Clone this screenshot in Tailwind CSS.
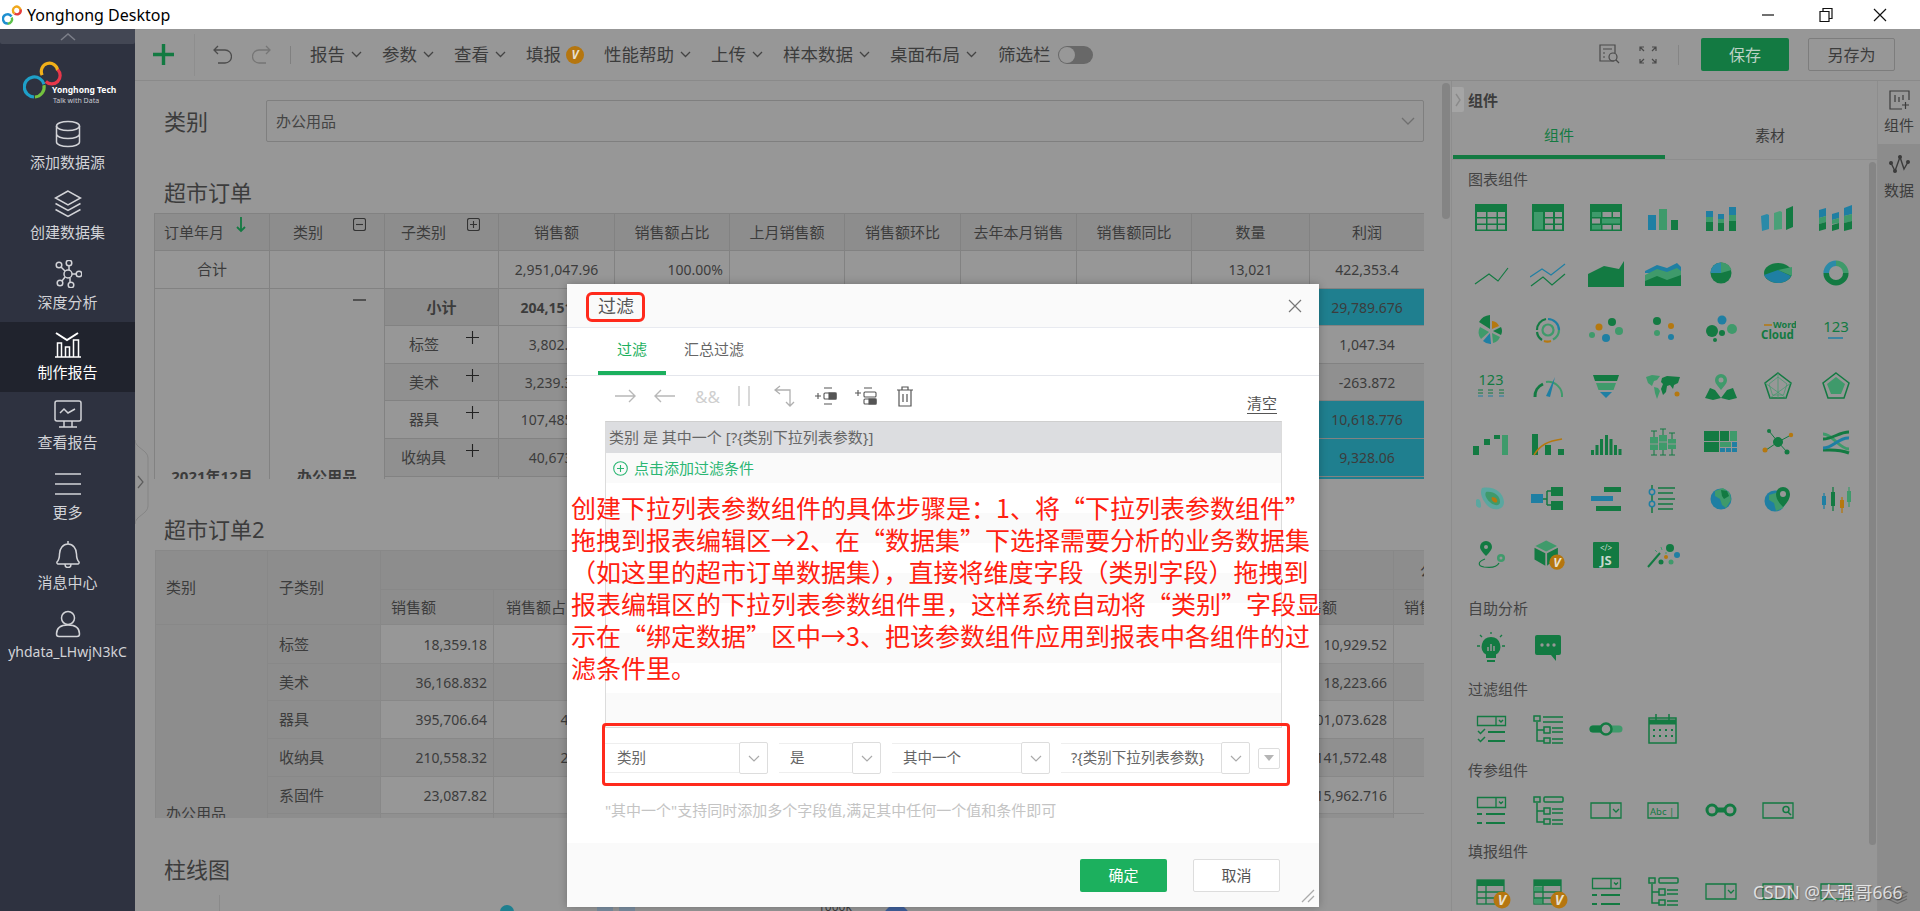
<!DOCTYPE html>
<html lang="zh-CN">
<head>
<meta charset="UTF-8">
<title>Yonghong Desktop</title>
<script src="https://cdn.jsdelivr.net/npm/@tailwindcss/browser@4"></script>
</head>
<body class="h-[911px] overflow-hidden bg-[#979797] font-['Noto_Sans','Noto_Sans_CJK_SC',sans-serif] text-[#3c3c3c]">

<!-- title bar -->
<div class="h-[29px] bg-white flex items-center text-black">
  <svg class="ml-[2px] w-[21px] h-[22px]" viewBox="0 0 21 22" fill="none" stroke-width="2.4">
    <path d="M6 19.5a4.6 4.6 0 1 1 3.5-7" stroke="#1e8fd0"/><path d="M9.8 13.5a4.6 4.6 0 0 1-4 6.2" stroke="#5cc04a"/>
    <path d="M12.5 9.5a3.8 3.8 0 1 1 6-3" stroke="#f0a81c"/><path d="M18.6 5.5a3.8 3.8 0 0 1-6 4" stroke="#e63c3c"/>
  </svg>
  <span class="ml-[4px] text-[16px]">Yonghong Desktop</span>
  <svg class="ml-auto mr-[24px] w-[134px] h-[16px]" viewBox="0 0 134 16" fill="none" stroke="#111" stroke-width="1.2">
    <path d="M0 8h12"/><path d="M58 4.5h9v10h-9zM61 4.500v-3h9v10h-3"/><path d="M112 2l12 12M124 2l-12 12"/>
  </svg>
</div>

<div class="flex h-[882px]">
  <!-- sidebar -->
  <aside class="w-[135px] shrink-0 bg-[#2e3240] flex flex-col items-center text-[15px] text-[#d2d3d7] relative z-10">
    <div class="w-full h-[15px] bg-[#434754] rounded-b-[2px] flex justify-center items-center">
      <svg class="w-[16px] h-[9px]" viewBox="0 0 16 9" fill="none" stroke="#7b7e88" stroke-width="1.6"><path d="M1 8l7-6 7 6"/></svg>
    </div>
    <div class="h-[68px] w-full relative">
      <svg class="absolute left-[23px] top-[17px] w-[42px] h-[41px]" viewBox="0 0 46 42" fill="none" stroke-width="3.5">
        <path d="M12 38a11 11 0 1 1 11-14" stroke="#1ea0c8"/><path d="M23 25a11 11 0 0 1-10 13" stroke="#74c23f"/>
        <path d="M21 14a9 9 0 1 1 17-5" stroke="#f1b019"/><path d="M38 8a9 9 0 0 1-13 13" stroke="#e8374a"/>
      </svg>
      <div class="absolute left-[52px] top-[40px] text-[8.500px] leading-[12px] font-bold text-white whitespace-nowrap">Yonghong Tech</div>
      <div class="absolute left-[53px] top-[52px] text-[7px] leading-[10px] text-[#c9cad0] whitespace-nowrap">Talk with Data</div>
    </div>

    <div class="w-full h-[70px] pt-[8px] flex flex-col items-center">
      <svg class="w-[28px] h-[28px]" viewBox="0 0 28 28" fill="none" stroke="#d2d3d7" stroke-width="1.5"><ellipse cx="14" cy="6" rx="11.500" ry="4.500"/><path d="M2.500 6v16c0 2.500 5 4.500 11.500 4.500s11.500-2 11.500-4.500V6M2.500 14c0 2.500 5 4.500 11.500 4.500s11.500-2 11.500-4.500"/></svg>
      <span class="mt-[4px] leading-[20px]">添加数据源</span>
    </div>
    <div class="w-full h-[70px] pt-[8px] flex flex-col items-center">
      <svg class="w-[28px] h-[28px]" viewBox="0 0 28 28" fill="none" stroke="#d2d3d7" stroke-width="1.5"><path d="M14 1L1.500 8 14 15l12.500-7zM1.500 13.500L14 20.500l12.500-7M1.500 19.500L14 26.500l12.500-7"/></svg>
      <span class="mt-[4px] leading-[20px]">创建数据集</span>
    </div>
    <div class="w-full h-[70px] pt-[8px] flex flex-col items-center">
      <svg class="w-[28px] h-[28px]" viewBox="0 0 28 28" fill="none" stroke="#d2d3d7" stroke-width="1.500"><circle cx="14" cy="14" r="4"/><circle cx="5" cy="5" r="2.800"/><circle cx="15" cy="3" r="2.800"/><circle cx="25" cy="14" r="2.800"/><circle cx="6" cy="23" r="2.800"/><circle cx="17" cy="25" r="2.800"/><path d="M7 7l4 4M15 6v4M18 14h4M8 21l3-4M16 22v-4"/></svg>
      <span class="mt-[4px] leading-[20px]">深度分析</span>
    </div>
    <div class="w-full h-[70px] pt-[8px] flex flex-col items-center bg-[#20232d] text-white">
      <svg class="w-[28px] h-[28px]" viewBox="0 0 28 28" fill="none" stroke="#fff" stroke-width="1.500"><path d="M2 3l11 7 11-7" stroke-width="2"/><path d="M1 27h26M3.500 27V13h4v14zM11.500 27V17h4v10zM19.500 27V10h5v17z"/></svg>
      <span class="mt-[4px] leading-[20px]">制作报告</span>
    </div>
    <div class="w-full h-[70px] pt-[8px] flex flex-col items-center">
      <svg class="w-[28px] h-[28px]" viewBox="0 0 28 28" fill="none" stroke="#d2d3d7" stroke-width="1.500"><rect x="1" y="1" width="26" height="20" rx="2"/><path d="M6 13l4-4 4 4 7-4M10 21v6M18 21v6M5 27h18"/></svg>
      <span class="mt-[4px] leading-[20px]">查看报告</span>
    </div>
    <div class="w-full h-[70px] pt-[8px] flex flex-col items-center">
      <svg class="w-[28px] h-[28px]" viewBox="0 0 28 28" fill="none" stroke="#d2d3d7" stroke-width="1.500"><path d="M1 4h26M1 14h26M1 24h26"/></svg>
      <span class="mt-[4px] leading-[20px]">更多</span>
    </div>
    <div class="w-full h-[70px] pt-[8px] flex flex-col items-center">
      <svg class="w-[28px] h-[28px]" viewBox="0 0 28 28" fill="none" stroke="#d2d3d7" stroke-width="1.500"><path d="M3 22c2-2 2.500-4 2.500-8 0-5.500 3.500-10 8.500-10s8.500 4.500 8.500 10c0 4 .5 6 2.500 8 .5 1-.5 2-1 2H4c-.5 0-1.500-1-1-2zM11 24.500a3 3 0 0 0 6 0M14 1v3"/></svg>
      <span class="mt-[4px] leading-[20px]">消息中心</span>
    </div>
    <div class="w-full h-[70px] pt-[8px] flex flex-col items-center">
      <svg class="w-[28px] h-[28px]" viewBox="0 0 28 28" fill="none" stroke="#d2d3d7" stroke-width="1.500"><circle cx="14" cy="8" r="6.500"/><path d="M2.500 24c0-6 4-9 11.500-9s11.500 3 11.500 9c0 1.500-1 2.500-2.500 2.500H5c-1.500 0-2.500-1-2.500-2.500z"/></svg>
      <span class="mt-[4px] leading-[20px] text-[14px] whitespace-nowrap">yhdata_LHwjN3kC</span>
    </div>
    <!-- collapse handle -->
    <svg class="absolute left-[135px] top-[411px] w-[14px] h-[84px]" viewBox="0 0 14 84" fill="#979797" stroke="#858585"><path d="M0 0c0 8 13 10 13 18v48c0 8-13 10-13 18z"/><path d="M3 36l5 6-5 6" fill="none" stroke="#5d5d5d" stroke-width="1.200"/></svg>
  </aside>

  <div class="flex-1 flex flex-col min-w-0">
    <!-- toolbar -->
    <div class="h-[52px] shrink-0 border-b border-[#8a8a8a] flex items-center text-[17.500px] pr-[25px]">
      <svg class="ml-[18px] w-[21px] h-[21px]" viewBox="0 0 21 21" fill="#137a42"><path d="M8.800 0h3.400v8.800H21v3.400h-8.800V21H8.800v-8.800H0V8.800h8.800z"/></svg>
      <div class="ml-[20px] w-px h-[42px] bg-[#8e8e8e]"></div>
      <svg class="ml-[18px] w-[19px] h-[19px]" viewBox="0 0 19 19" fill="none" stroke="#4c4c4c" stroke-width="1.300"><path d="M5 1L1 5l4 4M1 5h11a6 6 0 0 1 0 13H5"/></svg>
      <svg class="ml-[20px] w-[19px] h-[19px]" viewBox="0 0 19 19" fill="none" stroke="#767676" stroke-width="1.300"><path d="M14 1l4 4-4 4M18 5H7a6 6 0 0 0 0 13h7"/></svg>
      <div class="ml-[19px] w-px h-[18px] bg-[#808080]"></div>
      <div class="ml-[19px] flex items-center gap-[20px] whitespace-nowrap">
        <div class="flex items-center gap-[6px]"><span>报告</span><svg class="w-[11px] h-[7px]" viewBox="0 0 11 7" fill="none" stroke="#444" stroke-width="1.300"><path d="M1 1l4.500 4.500L10 1"/></svg></div>
        <div class="flex items-center gap-[6px]"><span>参数</span><svg class="w-[11px] h-[7px]" viewBox="0 0 11 7" fill="none" stroke="#444" stroke-width="1.300"><path d="M1 1l4.500 4.500L10 1"/></svg></div>
        <div class="flex items-center gap-[6px]"><span>查看</span><svg class="w-[11px] h-[7px]" viewBox="0 0 11 7" fill="none" stroke="#444" stroke-width="1.300"><path d="M1 1l4.500 4.500L10 1"/></svg></div>
        <div class="flex items-center gap-[5px]"><span>填报</span><span class="w-[18px] h-[18px] rounded-full bg-[#b5760f] text-[#e8e0d0] text-[12px] leading-[18px] text-center font-bold italic">V</span></div>
        <div class="flex items-center gap-[6px]"><span>性能帮助</span><svg class="w-[11px] h-[7px]" viewBox="0 0 11 7" fill="none" stroke="#444" stroke-width="1.300"><path d="M1 1l4.500 4.500L10 1"/></svg></div>
        <div class="flex items-center gap-[6px]"><span>上传</span><svg class="w-[11px] h-[7px]" viewBox="0 0 11 7" fill="none" stroke="#444" stroke-width="1.300"><path d="M1 1l4.500 4.500L10 1"/></svg></div>
        <div class="flex items-center gap-[6px]"><span>样本数据</span><svg class="w-[11px] h-[7px]" viewBox="0 0 11 7" fill="none" stroke="#444" stroke-width="1.300"><path d="M1 1l4.500 4.500L10 1"/></svg></div>
        <div class="flex items-center gap-[6px]"><span>桌面布局</span><svg class="w-[11px] h-[7px]" viewBox="0 0 11 7" fill="none" stroke="#444" stroke-width="1.300"><path d="M1 1l4.500 4.500L10 1"/></svg></div>
        <div class="flex items-center gap-[7px] ml-[1px]"><span>筛选栏</span>
          <div class="w-[35px] h-[18px] rounded-full bg-[#686868] p-[1px]"><div class="w-[16px] h-[16px] rounded-full bg-[#989898]"></div></div>
        </div>
      </div>
      <svg class="ml-auto w-[21px] h-[21px]" viewBox="0 0 21 21" fill="none" stroke="#4a4a4a" stroke-width="1.200"><path d="M15 17H1V1h15v8M4 5h9M4 9h2M4 13h2"/><circle cx="14" cy="13" r="4"/><path d="M17 16l3 3"/></svg>
      <svg class="ml-[19px] w-[18px] h-[18px]" viewBox="0 0 18 18" fill="none" stroke="#4a4a4a" stroke-width="1.200"><path d="M1 5V1h4M1 1l4 4M13 1h4v4M17 1l-4 4M1 13v4h4M1 17l4-4M17 13v4h-4M17 17l-4-4"/></svg>
      <div class="ml-[21px] w-px h-[20px] bg-[#858585]"></div>
      <div class="ml-[22px] w-[88px] h-[33px] rounded-[2px] bg-[#137a42] text-[#bcd2c5] text-[16px] flex items-center justify-center">保存</div>
      <div class="ml-[19px] w-[87px] h-[33px] rounded-[2px] border border-[#7d7d7d] text-[16px] flex items-center justify-center">另存为</div>
    </div>

    <div class="flex-1 flex min-h-0">
      <!-- report canvas -->
      <main class="w-[1316px] shrink-0 relative overflow-hidden pl-[19px]">
        <div class="mt-[19px] flex items-center h-[42px] pl-[10px] w-[1270px]">
          <span class="w-[102px] text-[22px]">类别</span>
          <div class="flex-1 h-[42px] border border-[#7f7f7f] rounded-[2px] flex items-center pl-[9px] pr-[8px] text-[15px] text-[#444]">办公用品
            <svg class="ml-auto w-[14px] h-[8px]" viewBox="0 0 14 8" fill="none" stroke="#6f6f6f" stroke-width="1.300"><path d="M1 1l6 6 6-6"/></svg>
          </div>
        </div>
        <div class="pt-[35px] pb-[6px] pl-[10px] text-[22px] leading-[30px]">超市订单</div>

        <div class="h-[266px] w-[1270px] overflow-hidden">
          <table class="table-fixed border-collapse w-[1270px] text-center text-[14px] [&_td]:border [&_td]:border-[#828282]">
            <colgroup><col class="w-[115px]"><col class="w-[115px]"><col class="w-[114px]"><col class="w-[116px]"><col class="w-[115px]"><col class="w-[115px]"><col class="w-[116px]"><col class="w-[116px]"><col class="w-[115px]"><col class="w-[118px]"><col class="w-[115px]"></colgroup>
            <tr class="h-[37px] bg-[#8d8d8d] text-[15px]">
              <td class="relative text-left pl-[9px]">订单年月<svg class="absolute right-[23px] top-[3px] w-[10px] h-[16px]" viewBox="0 0 10 16" fill="none" stroke="#137a42" stroke-width="1.800"><path d="M5 0v14M1 10l4 4 4-4"/></svg></td>
              <td class="relative text-left pl-[23px]">类别<svg class="absolute right-[18px] top-[4px] w-[13px] h-[13px]" viewBox="0 0 13 13" fill="none" stroke="#333" stroke-width="1.100"><rect x=".5" y=".5" width="12" height="12" rx="2"/><path d="M3 6.500h7"/></svg></td>
              <td class="relative text-left pl-[16px]">子类别<svg class="absolute right-[18px] top-[4px] w-[13px] h-[13px]" viewBox="0 0 13 13" fill="none" stroke="#333" stroke-width="1.100"><rect x=".5" y=".5" width="12" height="12" rx="2"/><path d="M3 6.500h7M6.500 3v7"/></svg></td>
              <td>销售额</td><td>销售额占比</td><td>上月销售额</td><td>销售额环比</td><td>去年本月销售</td><td>销售额同比</td><td>数量</td><td>利润</td>
            </tr>
            <tr class="h-[38px]"><td class="text-[15px]">合计</td><td></td><td></td><td>2,951,047.96</td><td class="text-right pr-[6px]">100.00%</td><td></td><td></td><td></td><td></td><td>13,021</td><td>422,353.4</td></tr>
            <tr class="h-[37px]">
              <td rowspan="6" class="font-bold text-[15px]">2021年12月</td>
              <td rowspan="6" class="font-bold text-[15px] relative">办公用品<svg class="absolute right-[18px] top-[10px] w-[13px] h-[2px]" viewBox="0 0 13 2"><path d="M0 1h13" stroke="#222" stroke-width="1.200"/></svg></td>
              <td class="font-bold bg-[#8d8d8d] text-[15px]">小计</td><td class="font-bold">204,151.76</td><td></td><td></td><td></td><td></td><td></td><td></td><td class="bg-[#1f7f8f]">29,789.676</td>
            </tr>
            <tr class="h-[38px]"><td class="relative text-[15px] text-left pl-[24px]">标签<svg class="absolute right-[19px] top-[5px] w-[13px] h-[13px]" viewBox="0 0 13 13" stroke="#222" stroke-width="1.100"><path d="M0 6.500h13M6.500 0v13"/></svg></td><td>3,802.47</td><td></td><td></td><td></td><td></td><td></td><td></td><td>1,047.34</td></tr>
            <tr class="h-[37px] bg-[#909090]"><td class="relative text-[15px] text-left pl-[24px]">美术<svg class="absolute right-[19px] top-[5px] w-[13px] h-[13px]" viewBox="0 0 13 13" stroke="#222" stroke-width="1.100"><path d="M0 6.500h13M6.500 0v13"/></svg></td><td>3,239.376</td><td></td><td></td><td></td><td></td><td></td><td></td><td>-263.872</td></tr>
            <tr class="h-[38px]"><td class="relative text-[15px] text-left pl-[24px]">器具<svg class="absolute right-[19px] top-[5px] w-[13px] h-[13px]" viewBox="0 0 13 13" stroke="#222" stroke-width="1.100"><path d="M0 6.500h13M6.500 0v13"/></svg></td><td>107,485.28</td><td></td><td></td><td></td><td></td><td></td><td></td><td class="bg-[#1f7f8f]">10,618.776</td></tr>
            <tr class="h-[38px] bg-[#909090]"><td class="relative text-[15px] text-left pl-[16px]">收纳具<svg class="absolute right-[19px] top-[5px] w-[13px] h-[13px]" viewBox="0 0 13 13" stroke="#222" stroke-width="1.100"><path d="M0 6.500h13M6.500 0v13"/></svg></td><td>40,673.8</td><td></td><td></td><td></td><td></td><td></td><td></td><td class="bg-[#1f7f8f]">9,328.06</td></tr>
            <tr class="h-[188px]"><td></td><td></td><td></td><td></td><td></td><td></td><td></td><td></td><td class="bg-[#1f7f8f]"></td></tr>
          </table>
        </div>

        <div class="pt-[35px] pb-[6px] pl-[10px] text-[22px] leading-[30px]">超市订单2</div>

        <div class="ml-px h-[268px] w-[1269px] overflow-hidden">
          <table class="table-fixed border-collapse w-[1350px] text-[14px] [&_td]:border [&_td]:border-[#888888]">
            <colgroup><col class="w-[112px]"><col class="w-[113px]"><col class="w-[113px]"><col class="w-[113px]"><col class="w-[113px]"><col class="w-[113px]"><col class="w-[113px]"><col class="w-[112px]"><col class="w-[112px]"><col class="w-[112px]"><col class="w-[112px]"><col class="w-[112px]"></colgroup>
            <tr class="h-[39px] bg-[#8d8d8d] text-[15px]">
              <td rowspan="2" class="pl-[10px]">类别</td><td rowspan="2" class="pl-[11px]">子类别</td><td colspan="9"></td><td class="pl-[26px] whitespace-nowrap">公司</td>
            </tr>
            <tr class="h-[35px] bg-[#8d8d8d] text-[15px] whitespace-nowrap">
              <td class="pl-[10px]">销售额</td><td class="pl-[12px]">销售额占比</td><td></td><td></td><td></td><td></td><td></td><td></td><td class="pl-[10px]">销售额</td><td class="pl-[10px]">销售额占比</td>
            </tr>
            <tr class="h-[39px] text-right">
              <td rowspan="6" class="bg-[#8d8d8d] pl-[10px] text-left text-[15px]">办公用品</td><td class="bg-[#8d8d8d] pl-[11px] text-left text-[15px]">标签</td><td class="pr-[6px]">18,359.18</td><td></td><td></td><td></td><td></td><td></td><td></td><td></td><td class="pr-[6px]">10,929.52</td><td></td>
            </tr>
            <tr class="h-[37px] text-right bg-[#909090]"><td class="bg-[#8d8d8d] pl-[11px] text-left text-[15px]">美术</td><td class="pr-[6px]">36,168.832</td><td></td><td></td><td></td><td></td><td></td><td></td><td></td><td class="pr-[6px]">18,223.66</td><td></td></tr>
            <tr class="h-[38px] text-right"><td class="bg-[#8d8d8d] pl-[11px] text-left text-[15px]">器具</td><td class="pr-[6px]">395,706.64</td><td class="pr-[6px]">4.65%</td><td></td><td></td><td></td><td></td><td></td><td></td><td class="pr-[6px]">101,073.628</td><td></td></tr>
            <tr class="h-[38px] text-right bg-[#909090]"><td class="bg-[#8d8d8d] pl-[11px] text-left text-[15px]">收纳具</td><td class="pr-[6px]">210,558.32</td><td class="pr-[6px]">2.47%</td><td></td><td></td><td></td><td></td><td></td><td></td><td class="pr-[6px]">141,572.48</td><td></td></tr>
            <tr class="h-[37px] text-right"><td class="bg-[#8d8d8d] pl-[11px] text-left text-[15px]">系固件</td><td class="pr-[6px]">23,087.82</td><td></td><td></td><td></td><td></td><td></td><td></td><td></td><td class="pr-[6px]">15,962.716</td><td></td></tr>
            <tr class="h-[189px] text-right bg-[#909090]"><td class="bg-[#8d8d8d]"></td><td></td><td></td><td></td><td></td><td></td><td></td><td></td><td></td><td></td></tr>
          </table>
        </div>

        <div class="pt-[36px] pl-[10px] text-[22px] leading-[30px]">柱线图</div>
        <!-- top of the chart, only a strip of it shows below the dialog -->
        <div class="absolute left-[84px] top-[814px] w-px h-[20px] bg-[#8a8a8a]"></div>
        <div class="absolute left-[365px] top-[824px] w-[14px] h-[14px] rounded-full bg-[#1f7f8f]"></div>
        <div class="absolute left-[462px] top-[824px] w-[16px] h-[10px] bg-[#7a8da0]"></div>
        <div class="absolute left-[484px] top-[824px] w-[16px] h-[10px] bg-[#7a8da0]"></div>
        <div class="absolute left-[683px] top-[818px] text-[12px] leading-[16px]">1000k</div>
        <div class="absolute left-[748px] top-[824px] w-[27px] h-[27px] rounded-full bg-[#3f5f99]"></div>

        <div class="absolute left-[1307px] top-[2px] w-[8px] h-[136px] rounded-full bg-[#848484]"></div>
      </main>

      <!-- component panel -->
      <section class="w-[426px] shrink-0 relative border-l border-[#8d8d8d]">
        <div class="absolute left-0 top-[6px] w-[12px] h-[25px] bg-[#a5a5a5] flex items-center justify-center rounded-r-[2px]">
          <svg class="w-[6px] h-[14px]" viewBox="0 0 6 14" fill="none" stroke="#8a8a8a" stroke-width="1.400"><path d="M1 1l4 6-4 6"/></svg>
        </div>
        <div class="h-[38px] pl-[16px] flex items-center text-[15px] font-bold">组件</div>
        <div class="h-[41px] flex text-[15px] border-b border-[#8d8d8d] pl-[1px]">
          <div class="w-[212px] text-center text-[#137a42] pt-[5px] border-b-[4px] border-[#137a42]">组件</div>
          <div class="flex-1 text-center pt-[5px] pr-[2px]">素材</div>
        </div>

        <div class="pl-[10px] h-[750px] overflow-hidden">
          <div class="pl-[6px] text-[15px] leading-[20px] mt-[9px] text-[#444]">图表组件</div>
          <div class="grid grid-cols-[repeat(7,57.5px)] auto-rows-[56.3px] [&>svg]:w-[36px] [&>svg]:h-[32px] [&>svg]:place-self-center">
            <!-- row 1 -->
            <svg viewBox="0 0 36 32"><rect x="2" y="3" width="32" height="27" fill="#137a42"/><path fill="#979797" d="M4 11h9v5H4zM14.500 11h9v5h-9zM25 11h7v5h-7zM4 17.500h9v5H4zM14.500 17.500h9v5h-9zM25 17.500h7v5h-7zM4 24h9v4.500H4zM14.500 24h9v4.500h-9zM25 24h7v4.500h-7z"/></svg>
            <svg viewBox="0 0 36 32"><rect x="2" y="3" width="32" height="27" fill="#137a42"/><path fill="#3f9a6b" d="M4 11h9v17.500H4z"/><path fill="#979797" d="M15 11h8v5h-8zM25 11h7v5h-7zM15 17.500h8v5h-8zM25 17.500h7v5h-7zM15 24h8v4.500h-8zM25 24h7v4.500h-7z"/></svg>
            <svg viewBox="0 0 36 32"><rect x="2" y="3" width="32" height="27" fill="#137a42"/><path fill="#3f9a6b" d="M4 11h9v5H4zM14 17.500h18v5H14zM4 24h9v4.500H4z"/><path fill="#979797" d="M14.500 11h9v5h-9zM25 11h7v5h-7zM4 17.500h8v5H4zM14.500 24h9v4.500h-9zM25 24h7v4.500h-7z"/></svg>
            <svg viewBox="0 0 36 32"><path fill="#1f7fa3" d="M3 14h8v15H3z"/><path fill="#3f9a6b" d="M14 8h8v21h-8z"/><path fill="#137a42" d="M26 19h7v10h-7z"/></svg>
            <svg viewBox="0 0 36 32"><path fill="#1f7fa3" d="M3 10h7v6H3zM15 13h6v5h-6zM26 6h7v8h-7z"/><path fill="#3f9a6b" d="M3 16h7v5H3zM15 18h6v4h-6zM26 14h7v6h-7z"/><path fill="#137a42" d="M3 21h7v9H3zM15 22h6v8h-6zM26 20h7v10h-7z"/></svg>
            <svg viewBox="0 0 36 32"><path fill="#2b8aa8" d="M1 15l6-2 2 1v14l-7 2z"/><path fill="#4aa078" d="M14 12l6-2 2 1v17l-8 1z"/><path fill="#137a42" d="M26 8l7-3v21l-7 3z"/></svg>
            <svg viewBox="0 0 36 32"><path fill="#1f7fa3" d="M1 9l7-2v8l-7 2zM14 13l7-2v6l-7 2zM26 7l8-3v9l-8 2z"/><path fill="#3f9a6b" d="M1 17l7-2v6l-7 2zM14 19l7-2v5l-7 1zM26 15l8-2v7l-8 2z"/><path fill="#137a42" d="M1 23l7-2v7l-7 2zM14 24l7-2v6l-7 2zM26 22l8-2v8l-8 2z"/></svg>
            <!-- row 2 -->
            <svg viewBox="0 0 36 32" fill="none" stroke="#137a42" stroke-width="1.200"><path d="M2 27l14-10 9 7 10-13"/></svg>
            <svg viewBox="0 0 36 32" fill="none" stroke-width="1.200"><path stroke="#1f7fa3" d="M0 20l12-8 9 6 14-11"/><path stroke="#137a42" d="M1 29l12-9 9 8 13-11"/></svg>
            <svg viewBox="0 0 36 32"><path fill="#137a42" d="M0 17l16-8 15 3 5-8v26H0z"/></svg>
            <svg viewBox="0 0 36 32"><path fill="#1f7fa3" d="M0 14l12-6 10 3 10-5 4 4v6H0z"/><path fill="#3f9a6b" d="M0 18l12-6 10 3 10-4 4 3v10H0z"/><path fill="#137a42" d="M0 24l12-5 10 4 14-5v11H0z"/></svg>
            <svg viewBox="0 0 36 32"><circle cx="18" cy="16" r="10.500" fill="#137a42"/><path fill="#2b8aa8" d="M18 16H7.500A10.500 10.500 0 0 1 18 5.500z"/><path fill="#3f9a6b" d="M18 16V5.500A10.500 10.500 0 0 1 28.500 13z"/></svg>
            <svg viewBox="0 0 36 32"><ellipse cx="18" cy="16" rx="14" ry="10" fill="#137a42"/><path fill="#1f7fa3" d="M4 18l14-5 13 6c-3 5-8 7-13 7-7 0-12-4-14-8z"/><path fill="#3f9a6b" d="M18 13l14-3v9z"/></svg>
            <svg viewBox="0 0 36 32" fill="none" stroke-width="5.500"><path stroke="#137a42" d="M8.200 16a9.800 9.800 0 0 0 19.600 0"/><path stroke="#2b8aa8" d="M8.200 16A9.800 9.800 0 0 1 18 6.200"/><path stroke="#3f9a6b" d="M18 6.200A9.800 9.800 0 0 1 27.800 16"/></svg>
            <!-- row 3 -->
            <svg viewBox="0 0 36 32"><path fill="#137a42" d="M17 15V1A14 14 0 0 0 6 8z"/><path fill="#b5780f" d="M19 15V7a8 8 0 0 1 7 5z"/><path fill="#137a42" d="M20 17l8-4a9 9 0 0 1 0 8z"/><path fill="#3f9a6b" d="M19 19l8 4a10 10 0 0 1-7 6z"/><path fill="#1f7fa3" d="M17 19l1 11a11 11 0 0 1-8-3z"/><path fill="#3f9a6b" d="M16 18l-8 7a11 11 0 0 1-1-12z"/></svg>
            <svg viewBox="0 0 36 32" fill="none" stroke-width="2.200"><path stroke="#1f7fa3" d="M18 5a11 11 0 0 1 11 11"/><path stroke="#137a42" d="M7 16a11 11 0 0 1 9-11"/><path stroke="#3f9a6b" d="M29 16a11 11 0 0 1-6 9.500"/><path stroke="#b5780f" d="M21 27a11 11 0 0 1-7 0"/><path stroke="#137a42" d="M12 26a11 11 0 0 1-5-8"/><circle cx="18" cy="16" r="5.500" stroke="#3f9a6b"/></svg>
            <svg viewBox="0 0 36 32"><circle cx="24" cy="8" r="4" fill="#137a42"/><circle cx="11" cy="13" r="3.500" fill="#b5780f"/><circle cx="31" cy="17" r="4" fill="#3f9a6b"/><circle cx="4" cy="21" r="3" fill="#3f9a6b"/><circle cx="18" cy="24" r="4" fill="#1f7fa3"/></svg>
            <svg viewBox="0 0 36 32"><circle cx="12" cy="7" r="4" fill="#137a42"/><circle cx="26" cy="12" r="3" fill="#b5780f"/><circle cx="12" cy="19" r="3" fill="#3f9a6b"/><circle cx="26" cy="23" r="3" fill="#1f7fa3"/></svg>
            <svg viewBox="0 0 36 32"><circle cx="9" cy="17" r="6" fill="#137a42"/><circle cx="19" cy="6" r="4.500" fill="#1f7fa3"/><circle cx="29" cy="15" r="5" fill="#3f9a6b"/><circle cx="19" cy="19" r="3" fill="#137a42"/><circle cx="12" cy="26" r="2" fill="#137a42"/></svg>
            <svg viewBox="0 0 36 32"><text x="13" y="14" font-size="9" font-weight="700" fill="#137a42">Word</text><path d="M4 11h8" stroke="#b5780f" stroke-width="1.500"/><text x="1" y="25" font-size="11.500" font-weight="700" fill="#137a42">Cloud</text></svg>
            <svg viewBox="0 0 36 32"><text x="18" y="18" font-size="15" text-anchor="middle" fill="#137a42">123</text><path d="M10 24h15" stroke="#1f7fa3" stroke-width="1.500"/></svg>
            <!-- row 4 -->
            <svg viewBox="0 0 36 32"><text x="18" y="15" font-size="14.500" text-anchor="middle" fill="#137a42">123</text><path d="M5 20h5M15 20h5M26 20h5M5 23h5M15 23h5M26 23h5" stroke="#137a42" stroke-width="1"/><path d="M5 26h5M15 26h5M26 26h5" stroke="#1f7fa3" stroke-width="1"/></svg>
            <svg viewBox="0 0 36 32" fill="none"><path d="M5 27a13.500 13.500 0 0 1 8-13" stroke="#137a42" stroke-width="3"/><path d="M16 12a14 14 0 0 1 16 15" stroke="#3f9a6b" stroke-width="2"/><path d="M25 7l-9 19 4 1z" fill="#1f7fa3"/></svg>
            <svg viewBox="0 0 36 32"><path fill="#137a42" d="M5 5h26l-2 6H7z"/><path fill="#3f9a6b" d="M8 13h20l-2.500 7h-15z"/><path fill="#1f7fa3" d="M12 22h12l-6 6z"/></svg>
            <svg viewBox="0 0 36 32"><path fill="#3f9a6b" d="M1 7l6-2 8 1-3 4-3 1-2 5-4-3z"/><path fill="#3f9a6b" d="M9 17l4 1 2 3-3 8-2-6z"/><path fill="#137a42" d="M17 8l5-2 13 1-2 6-4 2-1 4-3-4-3 1-1 6-3 3-2-6 2-5-2-2z"/><circle cx="32" cy="24" r="2.500" fill="#b5780f"/></svg>
            <svg viewBox="0 0 36 32"><path fill="#137a42" d="M2 28l5-10 5 2 6 8 6-8 6-2 4 10-8 2-8-2-8 2z"/><path fill="#3f9a6b" d="M18 20c-4-5-6-7-6-10a6 6 0 0 1 12 0c0 3-2 5-6 10z"/><circle cx="18" cy="10" r="2.500" fill="#979797"/></svg>
            <svg viewBox="0 0 36 32" fill="none" stroke="#137a42"><path d="M18 3l13 10-5 15H10L5 13z" stroke-width="1.500"/><path d="M18 7l9 7-3.500 11h-11L9 14zM18 3v25M5 13l21 15M31 13L10 28" stroke="#3f9a6b" stroke-width=".7"/></svg>
            <svg viewBox="0 0 36 32" fill="none"><path d="M18 3l13 10-5 15H10L5 13z" stroke="#137a42" stroke-width="1.500"/><path d="M18 7l9 7-4 10H13L9 14z" fill="#3f9a6b"/></svg>
            <!-- row 5 -->
            <svg viewBox="0 0 36 32"><path fill="#137a42" d="M0 20h6v9H0zM11 13h6v6h-6zM21 9h6v4h-6z"/><path fill="#3f9a6b" d="M29 9h6v20h-6z"/></svg>
            <svg viewBox="0 0 36 32"><path fill="#137a42" d="M2 8h6v21H2zM15 19h6v10h-6zM28 23h6v6h-6z"/><path d="M4 29c6-10 14-14 28-16" fill="none" stroke="#b5780f" stroke-width="1.500"/></svg>
            <svg viewBox="0 0 36 32"><path fill="#137a42" d="M3 24h3v5H3zM7.500 19h3v10h-3zM12 13h3v16h-3zM17 9h3v20h-3zM21.500 13h3v16h-3zM26 19h3v10h-3zM30.500 23h3v6h-3z"/></svg>
            <svg viewBox="0 0 36 32" stroke="#137a42" fill="#3f9a6b"><path d="M9 5v24M18 3v26M27 7v22M6 5h6M15 3h6M24 7h6M6 29h6M15 29h6M24 29h6"/><path stroke="none" d="M5 11h8v13H5zM14 9h8v15h-8zM23 13h8v10h-8z"/><path d="M5 18h8M14 16h8M23 18h8" stroke="#979797"/></svg>
            <svg viewBox="0 0 36 32"><path fill="#137a42" d="M1 5h15v10H1zM1 16h15v10H1zM17 5h9v10h-9z"/><path fill="#3f9a6b" d="M27 5h7v10h-7zM17 16h11v5H17z"/><path fill="#1f7fa3" d="M29 16h5v5h-5zM17 22h5v4h-5zM23 22h5v4h-5zM29 22h5v4h-5z"/></svg>
            <svg viewBox="0 0 36 32" stroke="#137a42"><path d="M18 16L9 5M18 16l13-7M18 16l-12 8M18 16l9 10"/><circle cx="18" cy="16" r="4.500" fill="#137a42"/><circle cx="9" cy="5" r="2" fill="#137a42" stroke="none"/><circle cx="31" cy="9" r="2.200" fill="#b5780f" stroke="none"/><circle cx="5" cy="24" r="2.500" fill="#b5780f" stroke="none"/><circle cx="27" cy="26" r="2.500" fill="#137a42" stroke="none"/></svg>
            <svg viewBox="0 0 36 32" fill="none" stroke-width="3"><path stroke="#3f9a6b" d="M5 8c10 0 16 15 26 15"/><path stroke="#137a42" d="M5 13c10 0 16-7 26-7M5 24c10 0 16-1 26 3"/><path stroke="#1f7fa3" d="M5 22c10 0 16-11 26-10"/></svg>
            <!-- row 6 -->
            <svg viewBox="0 0 36 32"><path fill="#5aa7a0" d="M9 5c12-2 21 4 22 14 0 8-9 9-15 5C10 19 6 10 9 5z"/><path fill="#3f9a6b" d="M13 9c8-1 14 4 14 10 0 4-5 4-9 1-4-3-7-8-5-11z"/><path fill="#b5780f" d="M19 14c4 0 6 3 5 5-2 2-7-2-5-5z"/><path fill="#5aa7a0" d="M3 17c3-3 5 1 5 6 0 3-4 2-5-1z"/></svg>
            <svg viewBox="0 0 36 32"><path fill="#1f7fa3" d="M1 11h12v9H1z"/><path fill="#137a42" d="M21 4h12v9H21zM21 18h12v9H21z"/><path d="M13 16h4M17 8h4M17 22h4M17 8v14" fill="none" stroke="#137a42" stroke-width="1.500"/></svg>
            <svg viewBox="0 0 36 32"><path fill="#137a42" d="M16 4h17v5H16z"/><path fill="#1f7fa3" d="M3 13h22v5H3z"/><path fill="#137a42" d="M8 23h25v5H8z"/></svg>
            <svg viewBox="0 0 36 32" fill="none"><path d="M7 2v28" stroke="#137a42" stroke-width="1.500"/><circle cx="7" cy="9" r="2.700" stroke="#1f7fa3" stroke-width="1.500" fill="#979797"/><circle cx="7" cy="21" r="2.700" stroke="#1f7fa3" stroke-width="1.500" fill="#979797"/><path d="M13 5h17M13 10h15M13 16h17M13 21h15M13 26h15" stroke="#137a42" stroke-width="1.500"/></svg>
            <svg viewBox="0 0 36 32"><circle cx="18" cy="16" r="10.500" fill="#1f7fa3"/><path fill="#3f9a6b" d="M12 8l8-3 7 5 1 7-5 8-4-3-2-6-5-3z"/><path fill="#137a42" d="M18 7l6 1 2 5-5 3-2-3z"/></svg>
            <svg viewBox="0 0 36 32"><circle cx="15" cy="18" r="10.500" fill="#1f7fa3"/><path fill="#3f9a6b" d="M9 12l10-3 6 8-2 8-7 3-2-8-5-3z"/><path fill="#137a42" d="M23 24c-5-5-7-9-7-13a7 7 0 0 1 14 0c0 4-2 8-7 13z"/><circle cx="23" cy="11" r="3" fill="#979797"/></svg>
            <svg viewBox="0 0 36 32" stroke-width="1.300"><path stroke="#1f7fa3" d="M6 10v16"/><path fill="#1f7fa3" d="M4 13h4v9H4z"/><path stroke="#137a42" d="M15 4v24"/><path fill="#137a42" d="M13 9h4v14h-4z"/><path stroke="#b5780f" d="M24 14v16"/><path fill="#b5780f" d="M22 17h4v8h-4z"/><path stroke="#3f9a6b" d="M31 4v20"/><path fill="#3f9a6b" d="M29 8h4v11h-4z"/></svg>
            <!-- row 7 -->
            <svg viewBox="0 0 36 32" fill="none"><path d="M13 17c-4-4-6-7-6-9a6 6 0 0 1 12 0c0 2-2 5-6 9z" fill="#137a42"/><circle cx="13" cy="8" r="2" fill="#979797"/><circle cx="28" cy="19" r="4" fill="#3f9a6b"/><circle cx="28" cy="19" r="1.500" fill="#979797"/><path d="M12 20c-8 3-7 7-1 8 7 1 13 0 15-4" stroke="#137a42" stroke-width="1.200"/></svg>
            <svg viewBox="0 0 40 32" class="overflow-visible"><path fill="#3f9a6b" d="M18 0l12 6-12 6L6 6z"/><path fill="#137a42" d="M5 8l12 6v14L5 21zM19 14l12-6v10l-12 10z"/><circle cx="30" cy="24" r="8.500" fill="#b5760f"/><text x="30" y="29" font-size="14" font-weight="700" font-style="italic" text-anchor="middle" fill="#e8e0d0">V</text></svg>
            <svg viewBox="0 0 36 32"><rect x="5" y="3" width="26" height="26" rx="1" fill="#137a42"/><text x="18" y="12" font-size="8" text-anchor="middle" fill="#c7d8cd">&lt;/&gt;</text><text x="18" y="26" font-size="13" font-weight="700" text-anchor="middle" fill="#c7d8cd">JS</text></svg>
            <svg viewBox="0 0 36 32"><path d="M3 28L15 14" stroke="#137a42" stroke-width="2"/><path d="M16 8l1 3M10 11l2 2M20 14h2" stroke="#3f9a6b"/><circle cx="25" cy="9" r="4" fill="#137a42"/><circle cx="21" cy="18" r="2" fill="#b5780f"/><circle cx="32" cy="16" r="3" fill="#1f7fa3"/><circle cx="16" cy="23" r="2.500" fill="#137a42"/><circle cx="26" cy="23" r="2.500" fill="#3f9a6b"/></svg>
          </div>

          <div class="pl-[6px] text-[15px] leading-[20px] mt-[15px] text-[#444]">自助分析</div>
          <div class="grid grid-cols-[repeat(7,57.5px)] auto-rows-[60px] [&>svg]:w-[36px] [&>svg]:h-[32px] [&>svg]:place-self-center">
            <svg viewBox="0 0 36 32"><path fill="#137a42" d="M18 5a9.500 9.500 0 0 0-5 17.500V26h10v-3.500A9.500 9.500 0 0 0 18 5zM14 28h8v2h-8z"/><path d="M15 19v-4M18 19v-7M21 19v-5" stroke="#979797" stroke-width="1.500"/><path d="M18 0v2M7 14H4M32 14h-3M9 5L7 3M27 5l2-2" stroke="#137a42" stroke-width="1.300"/></svg>
            <svg viewBox="0 0 36 32"><path fill="#137a42" d="M7 3h22a2 2 0 0 1 2 2v16a2 2 0 0 1-2 2h-3v6l-5-6H7a2 2 0 0 1-2-2V5a2 2 0 0 1 2-2z"/><circle cx="12" cy="13" r="1.700" fill="#979797"/><circle cx="18" cy="13" r="1.700" fill="#979797"/><circle cx="24" cy="13" r="1.700" fill="#979797"/></svg>
          </div>
          <div class="pl-[6px] text-[15px] leading-[20px] mt-[1px] text-[#444]">过滤组件</div>
          <div class="grid grid-cols-[repeat(7,57.5px)] auto-rows-[60px] [&>svg]:w-[36px] [&>svg]:h-[32px] [&>svg]:place-self-center">
            <svg viewBox="0 0 36 32" fill="none" stroke="#137a42"><path d="M4.500 3.500h28v9h-28zM23 3.500v9" stroke-width="1.300"/><path d="M26 7l2 2 2-2M5 18l2.500 2.500L12 16M5 26l2.500 2.500L12 24" stroke-width="1.500"/><path d="M15 19h17M15 28h17" stroke-width="2"/></svg>
            <svg viewBox="0 0 36 32" fill="none" stroke="#137a42" stroke-width="1.500"><path d="M7 9v19h7M7 17h7"/><rect x="4" y="3" width="6" height="5"/><rect x="14" y="14" width="6" height="6"/><rect x="14" y="25" width="6" height="5"/><path d="M13 4h20M13 9h20M22 15h11M22 19h11M22 26h11M22 30h11"/></svg>
            <svg viewBox="0 0 36 32" fill="none"><path d="M5 16h26" stroke="#3f9a6b" stroke-width="7" stroke-linecap="round"/><path d="M5 16h12" stroke="#137a42" stroke-width="7" stroke-linecap="round"/><circle cx="18" cy="16" r="5.500" fill="#979797" stroke="#137a42" stroke-width="2.500"/></svg>
            <svg viewBox="0 0 36 32" fill="none" stroke="#137a42"><rect x="4" y="5" width="27" height="25" stroke-width="1.500"/><path d="M4 9h27" stroke-width="5"/><path d="M11 1v7M24 1v7" stroke-width="1.500"/><path d="M8 17h2M14 17h2M20 17h2M26 17h2M8 23h2M14 23h2M20 23h2M26 23h2" stroke-width="2"/></svg>
          </div>
          <div class="pl-[6px] text-[15px] leading-[20px] mt-[1px] text-[#444]">传参组件</div>
          <div class="grid grid-cols-[repeat(7,57.5px)] auto-rows-[60px] [&>svg]:w-[36px] [&>svg]:h-[32px] [&>svg]:place-self-center">
            <svg viewBox="0 0 36 32" fill="none" stroke="#137a42"><path d="M4.500 3.500h28v10h-28zM23 3.500v10" stroke-width="1.300"/><path d="M26 7.500l2 2 2-2" stroke-width="1.300"/><path d="M4 20h5M13 20h19M4 29h5M13 29h19" stroke-width="2"/></svg>
            <svg viewBox="0 0 36 32" fill="none" stroke="#137a42" stroke-width="1.500"><path d="M7 9v19h7M7 17h7"/><rect x="4" y="3" width="6" height="5"/><rect x="14" y="14" width="6" height="6"/><rect x="14" y="25" width="6" height="5"/><rect x="14" y="3" width="19" height="5" rx="1"/><path d="M22 15h11M22 19h11M22 26h11M22 30h11"/></svg>
            <svg viewBox="0 0 36 32" fill="none" stroke="#137a42" stroke-width="1.300"><path d="M3 9h30v15H3zM22 9v15M25 15l3 3 3-3"/></svg>
            <svg viewBox="0 0 36 32"><path fill="none" stroke="#137a42" stroke-width="1.300" d="M3 9h30v15H3z"/><text x="5" y="21" font-size="9.500" fill="#137a42">Abc |</text></svg>
            <svg viewBox="0 0 36 32" fill="none"><path d="M9 16h18" stroke="#137a42" stroke-width="5"/><circle cx="9" cy="16" r="5" stroke="#137a42" stroke-width="3" fill="#979797"/><circle cx="27" cy="16" r="5" stroke="#137a42" stroke-width="3" fill="#979797"/></svg>
            <svg viewBox="0 0 36 32" fill="none" stroke="#137a42" stroke-width="1.300"><path d="M3 9h30v15H3z"/><circle cx="26" cy="15.500" r="3" stroke-width="1.500"/><path d="M28 18l3 3" stroke-width="1.500"/></svg>
          </div>
          <div class="pl-[6px] text-[15px] leading-[20px] mt-[1px] text-[#444]">填报组件</div>
          <div class="grid grid-cols-[repeat(7,57.5px)] auto-rows-[60px] [&>svg]:w-[36px] [&>svg]:h-[32px] [&>svg]:place-self-center">
            <svg viewBox="0 0 36 32" class="overflow-visible" fill="none" stroke="#137a42"><rect x="4" y="5" width="27" height="24" stroke-width="1.300"/><path d="M4 8h27" stroke-width="6"/><path d="M4 17h27M4 23h27M13 11v18" stroke-width="1.300"/><circle cx="29" cy="25" r="8.500" fill="#b5760f" stroke="none"/><text x="29" y="30" font-size="14" font-weight="700" font-style="italic" text-anchor="middle" fill="#e8e0d0" stroke="none">V</text></svg>
            <svg viewBox="0 0 36 32" class="overflow-visible" fill="none" stroke="#137a42"><rect x="4" y="5" width="27" height="24" stroke-width="1.300"/><path d="M4 8h27" stroke-width="6"/><path d="M4 14h9M4 26h9" stroke-width="5" stroke="#3f9a6b"/><path d="M4 17h27M4 23h27M13 11v18" stroke-width="1.300"/><circle cx="29" cy="25" r="8.500" fill="#b5760f" stroke="none"/><text x="29" y="30" font-size="14" font-weight="700" font-style="italic" text-anchor="middle" fill="#e8e0d0" stroke="none">V</text></svg>
            <svg viewBox="0 0 36 32" fill="none" stroke="#137a42"><path d="M4.500 3.500h28v10h-28zM23 3.500v10" stroke-width="1.300"/><path d="M26 7.500l2 2 2-2" stroke-width="1.300"/><path d="M4 20h5M13 20h19M4 29h5M13 29h19" stroke-width="2"/></svg>
            <svg viewBox="0 0 36 32" fill="none" stroke="#137a42" stroke-width="1.500"><path d="M7 9v19h7M7 17h7"/><rect x="4" y="3" width="6" height="5"/><rect x="14" y="14" width="6" height="6"/><rect x="14" y="25" width="6" height="5"/><rect x="14" y="3" width="19" height="5" rx="1"/><path d="M22 15h11M22 19h11M22 26h11M22 30h11"/></svg>
            <svg viewBox="0 0 36 32" fill="none" stroke="#137a42" stroke-width="1.300"><path d="M3 9h30v15H3zM22 9v15M25 15l3 3 3-3"/></svg>
            <svg viewBox="0 0 36 32" fill="none" stroke="#137a42" stroke-width="1.300"><path d="M3 9h30v15H3z"/></svg>
            <svg viewBox="0 0 36 32" fill="none" stroke="#137a42" stroke-width="1.300"><path d="M3 9h30v15H3z"/></svg>
          </div>
        </div>
        <div class="absolute left-[417px] top-[81px] w-[7px] h-[683px] rounded-full bg-[#858585]"></div>
      </section>

      <!-- right rail -->
      <div class="flex-1 flex flex-col text-[15px] border-l border-[#8d8d8d]">
        <div class="h-[63px] flex flex-col items-center pt-[9px]">
          <svg class="w-[21px] h-[20px]" viewBox="0 0 21 20" fill="none" stroke="#3c3c3c" stroke-width="1.200"><path d="M20 10V1H1v18h12M6 12V5M10 12V7M14 10V5M13 15h7M16.500 12v7"/></svg>
          <span class="mt-[5px] leading-[20px]">组件</span>
        </div>
        <div class="flex-1 bg-[#8c8c8c] flex flex-col items-center pt-[11px]">
          <svg class="w-[21px] h-[18px]" viewBox="0 0 21 18" fill="none" stroke="#3c3c3c" stroke-width="1.400"><path d="M2 8l4 8 5-14 4 12 4-7"/><circle cx="2" cy="8" r="1.300" fill="#3c3c3c"/><circle cx="11" cy="2" r="1.300" fill="#3c3c3c"/><circle cx="6" cy="16" r="1.300" fill="#3c3c3c"/><circle cx="19" cy="7" r="1.300" fill="#3c3c3c"/></svg>
          <span class="mt-[7px] leading-[20px]">数据</span>
        </div>
      </div>
    </div>
  </div>
</div>

<!-- filter dialog -->
<div class="absolute left-[567px] top-[284px] w-[752px] h-[623px] bg-white flex flex-col rounded-[2px] shadow-[0_0_8px_rgba(0,0,0,0.25)] text-[#666]">
  <div class="h-[44px] shrink-0 bg-[#fafafa] border-b border-[#e8eaf0] flex items-center pl-[31px] pr-[17px] text-[#555]">
    <span class="text-[18px] pt-[2px]">过滤</span>
    <svg class="ml-auto w-[14px] h-[14px]" viewBox="0 0 14 14" stroke="#777" stroke-width="1.200"><path d="M1 1l12 12M13 1L1 13"/></svg>
  </div>
  <div class="h-[48px] shrink-0 border-b border-[#e4e6ec] flex text-[15px]">
    <div class="ml-[31px] w-[68px] text-center pt-[10px] text-[#1cb05e] border-b-[4px] border-[#1cb05e] h-[47px]">过滤</div>
    <div class="ml-[18px] pt-[10px]">汇总过滤</div>
  </div>
  <div class="h-[45px] shrink-0 flex items-center pl-[48px] pr-[42px] pb-[5px]">
    <svg class="w-[21px] h-[14px]" viewBox="0 0 21 14" fill="none" stroke="#b8b8b8" stroke-width="1.400"><path d="M0 7h20M14 1l6 6-6 6"/></svg>
    <svg class="ml-[18px] w-[21px] h-[14px]" viewBox="0 0 21 14" fill="none" stroke="#b8b8b8" stroke-width="1.400"><path d="M21 7H1M7 1L1 7l6 6"/></svg>
    <span class="ml-[20px] w-[20px] text-[17px] text-[#cfcfcf] leading-none">&amp;&amp;</span>
    <svg class="ml-[23px] w-[12px] h-[20px]" viewBox="0 0 12 20" stroke="#c8c8c8" stroke-width="1.400"><path d="M1 0v20M11 0v20"/></svg>
    <svg class="ml-[24px] w-[22px] h-[22px]" viewBox="0 0 22 22" fill="none" stroke="#b0b0b0" stroke-width="1.300"><path d="M6 1L1 5l5 4M1 5h15v16M12 17l4 4 4-4"/></svg>
    <svg class="ml-[19px] w-[22px] h-[18px]" viewBox="0 0 22 18" fill="none" stroke="#555" stroke-width="1.100"><path d="M0 9h6M3 6v6M9 1h8M9 17h8"/><rect x="9" y="6" width="12" height="6" rx="1"/><rect x="14" y="6" width="7" height="6" fill="#555"/></svg>
    <svg class="ml-[18px] w-[22px] h-[18px]" viewBox="0 0 22 18" fill="none" stroke="#555" stroke-width="1.100"><path d="M0 6h6M3 3v6M9 1h8"/><rect x="9" y="5" width="12" height="5" rx="1"/><rect x="9" y="12" width="12" height="5" rx="1"/><rect x="14" y="12" width="7" height="5" fill="#555"/></svg>
    <svg class="ml-[20px] w-[16px] h-[21px]" viewBox="0 0 16 21" fill="none" stroke="#555" stroke-width="1.200"><path d="M0 4h16M5 4V1h6v3M2 4v16h12V4M6 8v8M10 8v8"/></svg>
    <span class="ml-auto text-[15px] underline underline-offset-[4px] text-[#555] pt-[15px]">清空</span>
  </div>
  <div class="ml-[38px] w-[677px] h-[307px] shrink-0 border border-[#dcdcdc] border-t-[#cfcfcf] overflow-hidden">
    <div class="h-[31px] bg-[#dcdde0] flex items-center pl-[3px] text-[15px] whitespace-nowrap">类别 是 其中一个 [?{类别下拉列表参数}]</div>
    <div class="h-[30px] bg-[#fafafa] flex items-center pl-[7px] text-[15px] text-[#2bb673]">
      <svg class="w-[15px] h-[15px] mr-[6px]" viewBox="0 0 15 15" fill="none" stroke="#2bb673" stroke-width="1.100"><circle cx="7.500" cy="7.500" r="6.800"/><path d="M4 7.500h7M7.500 4v7"/></svg>点击添加过滤条件
    </div>
    <div class="h-[30px]"></div><div class="h-[30px] bg-[#fafafa]"></div>
    <div class="h-[30px]"></div><div class="h-[30px] bg-[#fafafa]"></div>
    <div class="h-[30px]"></div><div class="h-[30px] bg-[#fafafa]"></div>
    <div class="h-[30px]"></div><div class="h-[36px] bg-[#fafafa]"></div>
  </div>
  <div class="mt-[14px] ml-[38px] h-[32px] shrink-0 flex items-center text-[14.500px] whitespace-nowrap">
    <div class="w-[134px] h-[30px] border-y border-[#eeeeee] flex items-center pl-[12px]">类别</div>
    <div class="w-[29px] h-[32px] border border-[#dddddd] rounded-[2px] flex items-center justify-center"><svg class="w-[12px] h-[7px]" viewBox="0 0 12 7" fill="none" stroke="#aaa" stroke-width="1.200"><path d="M1 1l5 5 5-5"/></svg></div>
    <div class="ml-[11px] w-[73px] h-[30px] border-y border-[#eeeeee] flex items-center pl-[11px]">是</div>
    <div class="w-[29px] h-[32px] border border-[#dddddd] rounded-[2px] flex items-center justify-center"><svg class="w-[12px] h-[7px]" viewBox="0 0 12 7" fill="none" stroke="#aaa" stroke-width="1.200"><path d="M1 1l5 5 5-5"/></svg></div>
    <div class="ml-[11px] w-[129px] h-[30px] border-y border-[#eeeeee] flex items-center pl-[11px]">其中一个</div>
    <div class="w-[29px] h-[32px] border border-[#dddddd] rounded-[2px] flex items-center justify-center"><svg class="w-[12px] h-[7px]" viewBox="0 0 12 7" fill="none" stroke="#aaa" stroke-width="1.200"><path d="M1 1l5 5 5-5"/></svg></div>
    <div class="ml-[11px] w-[160px] h-[30px] border-y border-[#eeeeee] flex items-center pl-[10px]">?{类别下拉列表参数}</div>
    <div class="w-[29px] h-[32px] border border-[#dddddd] rounded-[2px] flex items-center justify-center"><svg class="w-[12px] h-[7px]" viewBox="0 0 12 7" fill="none" stroke="#aaa" stroke-width="1.200"><path d="M1 1l5 5 5-5"/></svg></div>
    <div class="ml-[8px] w-[22px] h-[21px] border border-[#dddddd] rounded-[2px] flex items-center justify-center"><svg class="w-[10px] h-[6px]" viewBox="0 0 10 6" fill="#b5b5b5"><path d="M0 0h10L5 6z"/></svg></div>
  </div>
  <div class="mt-[26px] ml-[38px] text-[15px] leading-[20px] text-[#c4c4c4] whitespace-nowrap">"其中一个"支持同时添加多个字段值,满足其中任何一个值和条件即可</div>
  <div class="mt-auto h-[64px] shrink-0 bg-[#fafafa] flex items-start pt-[16px] pl-[513px] text-[15px] relative">
    <div class="w-[87px] h-[33px] rounded-[2px] bg-[#1cb05e] text-white flex items-center justify-center">确定</div>
    <div class="ml-[26px] w-[87px] h-[33px] rounded-[2px] border border-[#dddddd] bg-white text-[#555] flex items-center justify-center">取消</div>
    <svg class="absolute right-[4px] bottom-[4px] w-[14px] h-[14px]" viewBox="0 0 14 14" stroke="#aaa" stroke-width="1.300"><path d="M1 13L13 1M7 13l6-6"/></svg>
  </div>
</div>

<!-- red annotations drawn over the screenshot -->
<div class="absolute left-[586px] top-[292px] w-[59px] h-[30px] border-[3px] border-[#ff2a1c] rounded-[6px]"></div>
<div class="absolute left-[602px] top-[723px] w-[688px] h-[63px] border-[3px] border-[#ff2a1c] rounded-[4px]"></div>
<div class="absolute left-[571px] top-[491px] font-['Noto_Sans_CJK_SC',sans-serif] text-[25px] leading-[32px] text-[#ff2010] whitespace-nowrap">创建下拉列表参数组件的具体步骤是：1、将“下拉列表参数组件”<br>拖拽到报表编辑区→2、在“数据集”下选择需要分析的业务数据集<br>（如这里的超市订单数据集），直接将维度字段（类别字段）拖拽到<br>报表编辑区的下拉列表参数组件里，这样系统自动将“类别”字段显<br>示在“绑定数据”区中→3、把该参数组件应用到报表中各组件的过<br>滤条件里。</div>

<!-- csdn watermark -->
<svg class="absolute left-[1887px] top-[887px] w-[21px] h-[17px]" viewBox="0 0 21 17" fill="none" stroke="#6a6a6a" stroke-width="1.200"><path d="M10.500 1L1 5.500l9.500 4.500L20 5.500zM1 9l9.500 4.500L20 9M1 12l9.500 4.500L20 12"/></svg>
<div class="absolute left-[1753px] top-[880px] text-[17.500px] leading-[24px] text-white/75 [text-shadow:1px_1px_1px_rgba(0,0,0,0.35)] whitespace-nowrap">CSDN @大强哥666</div>

</body>
</html>
